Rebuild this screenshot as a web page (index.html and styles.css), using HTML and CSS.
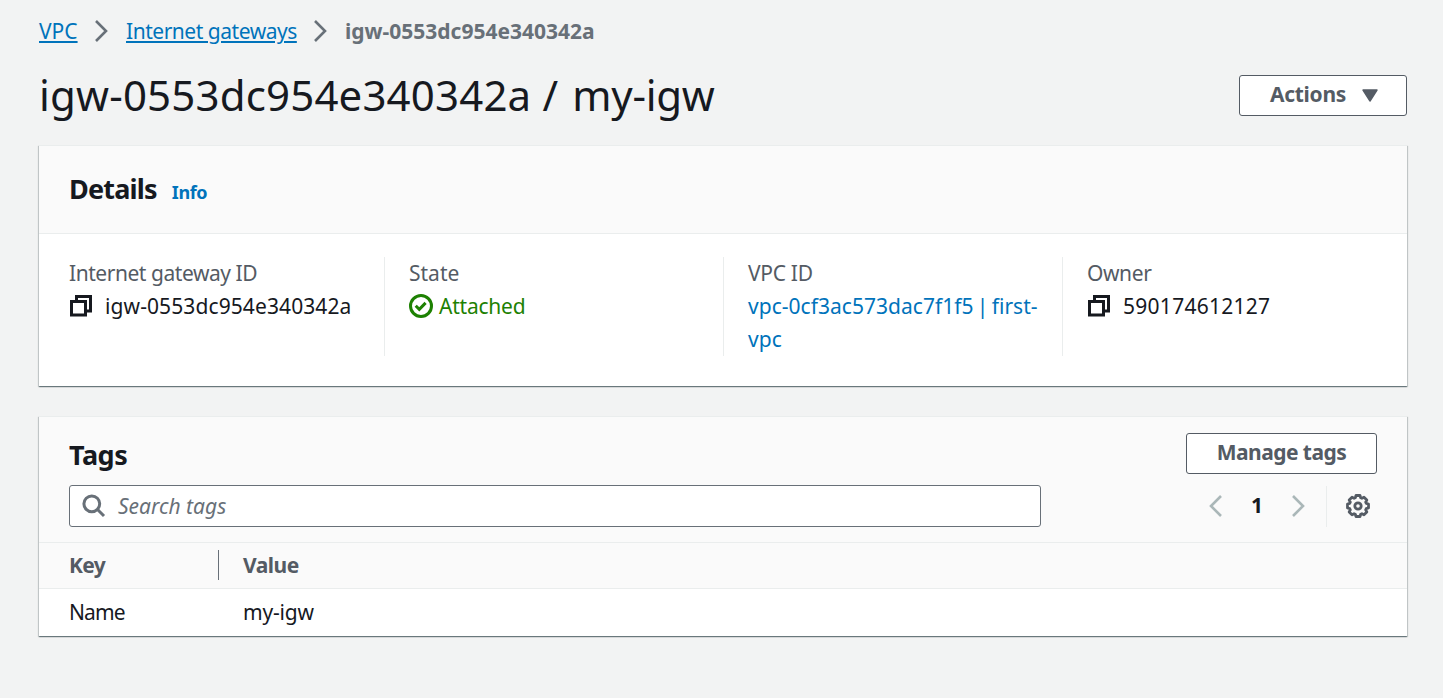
FILE: index.html
```html
<!DOCTYPE html>
<html lang="en">
<head>
<meta charset="utf-8">
<title>igw-0553dc954e340342a / my-igw</title>
<link rel="stylesheet" href="styles.css">
</head>
<body>
<nav class="breadcrumbs">
  <a class="crumb-vpc" href="#">VPC</a>
  <svg class="chevron" width="14" height="24" viewBox="0 0 14 24"><path d="M2 2l10 10L2 22"/></svg>
  <a class="crumb-list" href="#">Internet gateways</a>
  <svg class="chevron" width="14" height="24" viewBox="0 0 14 24"><path d="M2 2l10 10L2 22"/></svg>
  <span class="crumb-current">igw-0553dc954e340342a</span>
</nav>
<header class="page-header">
  <h1>igw-0553dc954e340342a / <span class="name">my-igw</span></h1>
  <button class="button actions"><span>Actions</span><svg width="16" height="13" viewBox="0 0 16 13"><path d="M1 1h14L8 12z" fill="#545b64" stroke="#545b64" stroke-width="1.4" stroke-linejoin="round"/></svg></button>
</header>
<main>
  <section class="card">
    <div class="details-header"><h2 class="t-details">Details</h2><a class="info" href="#">Info</a></div>
    <div class="details">
      <div class="field">
        <div class="label l-igw">Internet gateway ID</div>
        <div class="value"><svg class="copy" width="22" height="22" viewBox="0 0 22 22"><path d="M1.5 6.5h14v13.5h-14zM6.500 6V1.500h14v14.500H16"/></svg><span class="v-igw">igw-0553dc954e340342a</span></div>
      </div>
      <div class="field">
        <div class="label l-state">State</div>
        <div class="value status"><svg width="24" height="24" viewBox="0 0 24 24"><circle cx="12" cy="12" r="10.500"/><path d="M6.700 11.700l3.600 3.600 6.300-6.400"/></svg><span class="v-state">Attached</span></div>
      </div>
      <div class="field">
        <div class="label l-vpc">VPC ID</div>
        <a class="value vpc" href="#">vpc-0cf3ac573dac7f1f5 | first-<br>vpc</a>
      </div>
      <div class="field">
        <div class="label l-owner">Owner</div>
        <div class="value"><svg class="copy" width="22" height="22" viewBox="0 0 22 22"><path d="M1.500 6.500h14v13.500h-14zM6.500 6V1.500h14v14.500H16"/></svg><span class="v-owner">590174612127</span></div>
      </div>
    </div>
  </section>
  <section class="card">
    <div class="tags-header">
      <div class="title-row"><h2 class="t-tags">Tags</h2><button class="button manage"><span>Manage tags</span></button></div>
      <div class="tools">
        <label class="search">
          <svg width="24" height="24" viewBox="0 0 24 24"><circle cx="9.800" cy="9.800" r="7.900"/><path d="M15.500 15.500l6.500 6.500"/></svg>
          <span>Search tags</span>
        </label>
        <div class="pager">
          <svg class="chevron muted" width="14" height="24" viewBox="0 0 14 24"><path d="M12 2L2 12l10 10"/></svg>
          <b>1</b>
          <svg class="chevron muted" width="14" height="24" viewBox="0 0 14 24"><path d="M2 2l10 10L2 22"/></svg>
          <span class="settings"><svg width="24" height="24" viewBox="0 0 24 24"><path d="M9.300 3.800L10 1.500h4l.7 2.300 1.200.5 2.100-1.100L20.800 6l-1.100 2.100.5 1.200 2.300.7v4l-2.300.7-.5 1.200 1.100 2.100-2.800 2.800-2.100-1.100-1.200.5-.7 2.300h-4l-.7-2.300-1.200-.5L6 20.800 3.200 18l1.100-2.100-.5-1.200L1.500 14v-4l2.300-.7.5-1.200L3.200 6 6 3.200l2.100 1.100z"/><circle cx="12" cy="12" r="3.200"/></svg></span>
        </div>
      </div>
    </div>
    <div class="row head"><div class="key"><span class="k-head">Key</span></div><div class="v-head">Value</div></div>
    <div class="row"><div class="key"><span class="k-name">Name</span></div><div class="v-name">my-igw</div></div>
  </section>
</main>
</body>
</html>
```
FILE: styles.css
```css
* { box-sizing: border-box; }
body { margin: 0; min-height: 100vh; padding: 15px 36px 40px 39px; background: #f2f3f3; color: #16191f; font: 21px/33px "Noto Sans", "Open Sans", sans-serif; }
a { color: #0073bb; text-decoration: none; }
svg { display: block; flex: none; fill: none; }
h1, h2 { margin: 0; white-space: nowrap; }
.breadcrumbs { display: flex; align-items: center; height: 32px; white-space: nowrap; }
.breadcrumbs a, .crumb-current { line-height: 32px; }
.breadcrumbs a { text-decoration: underline; text-decoration-thickness: 2px; text-underline-offset: 2px; }
.chevron { stroke: #687078; stroke-width: 2.6; }
.breadcrumbs .chevron { margin: 0 18px 0 16px; }
.crumb-vpc { width: 39px; }
.crumb-list { width: 171px; letter-spacing: -.47px; }
.crumb-current { color: #687078; font-weight: 700; }
.page-header { display: flex; justify-content: space-between; align-items: flex-start; height: 98px; padding-top: 28px; }
h1 { margin-top: -7px; font-size: 42px; line-height: 54px; font-weight: 400; letter-spacing: .17px; }
.name { margin-left: 3px; letter-spacing: -.3px; }
.button { display: flex; align-items: center; justify-content: center; height: 41px; padding: 0; border: 1px solid #545b64; border-radius: 3px; background: #fff; color: #545b64; font: 700 21px/30px "Noto Sans", sans-serif; white-space: nowrap; }
.button span { padding-bottom: 3px; }
.actions { width: 168px; padding-left: 2px; gap: 16px; }
.actions span { letter-spacing: -.3px; }
.manage { width: 191px; letter-spacing: -.55px; }
main { display: flex; flex-direction: column; gap: 30px; }
.card { background: #fff; box-shadow: 0 1px 1px 0 rgba(0,28,36,.4), 1px 1px 1px 0 rgba(0,28,36,.15), -1px 1px 1px 0 rgba(0,28,36,.15); border-top: 1px solid #eaeded; }
.details-header { display: flex; align-items: baseline; height: 88px; padding: 25px 30px 0; gap: 15px; background: #fafafa; border-bottom: 1px solid #eaeded; }
h2 { font-size: 27px; line-height: 36px; }
.t-details { letter-spacing: -.8px; }
.t-tags { letter-spacing: -.5px; }
.info { font-size: 18px; font-weight: 700; letter-spacing: -.45px; }
.details { display: grid; grid-template-columns: 346px 339px 339px 1fr; padding: 23px 0 30px; height: 152px; }
.field { height: 99px; padding-left: 24px; border-right: 1px solid #eaeded; white-space: nowrap; }
.field:first-child { padding-left: 30px; }
.field:last-child { border: 0; }
.label { color: #545b64; height: 33px; line-height: 32px; }
.l-igw { letter-spacing: -.45px; }
.l-vpc { letter-spacing: -.3px; }
.l-owner { letter-spacing: -.4px; }
.value { display: flex; align-items: center; height: 33px; }
.value svg { margin-bottom: 2px; }
.v-igw { letter-spacing: .1px; }
.v-state { letter-spacing: -.22px; }
.v-owner { letter-spacing: .27px; }
.copy { margin: 0 13px 0 1px; stroke: #16191f; stroke-width: 3; }
.status { color: #1d8102; gap: 6px; }
.status svg { stroke: #1d8102; stroke-width: 3; }
.vpc { display: block; letter-spacing: .03px; word-spacing: -2.2px; }
.tags-header { height: 125px; padding: 16px 30px 0; background: #fafafa; }
.title-row { display: flex; justify-content: space-between; height: 52px; }
.title-row h2 { padding-top: 4px; }
.tools { display: flex; justify-content: space-between; }
.search { display: flex; align-items: center; width: 972px; height: 42px; padding-left: 12px; gap: 12px; border: 1px solid #687078; border-radius: 3px; background: #fff; color: #687078; font-style: italic; }
.search svg { stroke: #687078; stroke-width: 3; }
.pager { display: flex; align-items: center; height: 42px; }
.pager b { width: 68px; padding-bottom: 1px; text-align: center; }
.muted { stroke: #aab7b8; }
.settings { height: 41px; display: flex; align-items: center; margin-left: 21px; padding: 0 7px 0 19px; border-left: 1px solid #eaeded; }
.settings svg { stroke: #545b64; stroke-width: 2.8; stroke-linejoin: round; }
.row { display: flex; align-items: flex-start; height: 47px; padding: 8px 0 0 30px; line-height: 30px; }
.row.head { padding-top: 7px; border-top: 1px solid #eaeded; border-bottom: 1px solid #eaeded; background: #fafafa; color: #545b64; font-weight: 700; }
.key { width: 150px; height: 30px; margin-right: 24px; }
.head .key { border-right: 1px solid #687078; }
.k-head { letter-spacing: -.6px; }
.v-head { letter-spacing: -.5px; }
.k-name { letter-spacing: -.9px; }
.v-name { letter-spacing: -.2px; }
```
